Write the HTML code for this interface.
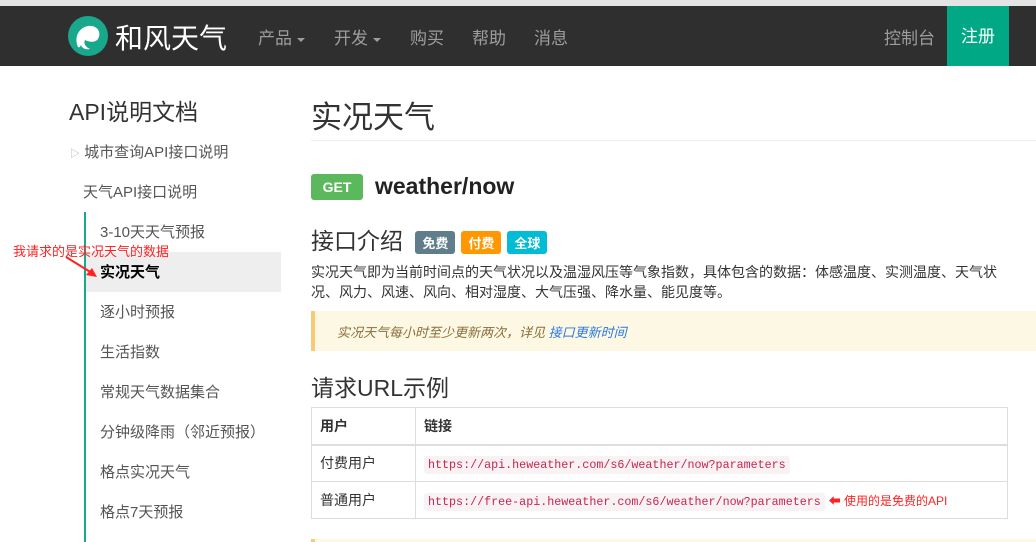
<!DOCTYPE html>
<html><head><meta charset="utf-8"><style>
*{margin:0;padding:0;box-sizing:border-box}
body{width:1036px;height:542px;overflow:hidden;background:#fff;font-family:"Liberation Sans","Noto Sans CJK SC",sans-serif;color:#333;position:relative}
.abs{position:absolute;white-space:nowrap}
.top{position:absolute;left:0;top:0;width:1036px;height:6px;background:#e4e4e4}
.nav{position:absolute;left:0;top:6px;width:1036px;height:60px;background:#2f2f2f}
.nav .it{position:absolute;top:18px;font-size:17px;color:#9d9d9d}
.car{display:inline-block;width:0;height:0;border-left:4px solid transparent;border-right:4px solid transparent;border-top:4px solid #9d9d9d;vertical-align:middle;margin-left:5px}
.reg{position:absolute;left:947px;top:0;width:62px;height:60px;background:#00a886;color:#fff;font-size:17px;text-align:center;line-height:62px}
.side{font-size:15px;color:#555}
.badge{display:inline-block;color:#fff;font-size:13px;font-weight:bold;padding:2px 7px;border-radius:3px;margin-left:6px;vertical-align:middle}
code{font-family:"Liberation Mono",monospace;font-size:11.7px;color:#c7254e;background:#f9f2f4;padding:2px 4px;border-radius:3px}
table{position:absolute;left:311px;top:407px;width:697px;border-collapse:collapse;font-size:14px}
td{border:1px solid #ddd;padding:0 8px;height:37px}
</style></head><body>
<div class="top"></div>
<div class="nav">
<svg class="abs" style="left:68px;top:10px" width="40" height="40" viewBox="0 0 40 40"><circle cx="20" cy="20" r="20" fill="#1aa88c"/><path d="M10 31 C6 22 10 12 20 10 C29 9 34 16 30 23 C27 27 21 26 17 24 C15 28 18 31 22 33 C17 34 14 32 13 29 C12 31 11 32 10 31Z" fill="#fff"/></svg>
<div class="abs" style="left:115px;top:11px;font-size:28px;color:#fff">和风天气</div>
<div class="it" style="left:258px">产品<span class="car"></span></div>
<div class="it" style="left:334px">开发<span class="car"></span></div>
<div class="it" style="left:410px">购买</div>
<div class="it" style="left:472px">帮助</div>
<div class="it" style="left:534px">消息</div>
<div class="it" style="left:884px">控制台</div>
<div class="reg">注册</div>
</div>

<div class="abs" style="left:69px;top:93px;font-size:23px;color:#333">API说明文档</div>
<div class="abs side" style="left:70px;top:141px"><span style="font-size:10px;color:#aaa">▷</span> 城市查询API接口说明</div>
<div class="abs side" style="left:83px;top:181px">天气API接口说明</div>
<div class="abs" style="left:84px;top:212px;width:2px;height:330px;background:#1aa88c"></div>
<div class="abs side" style="left:100px;top:221px">3-10天天气预报</div>
<div class="abs" style="left:86px;top:252px;width:195px;height:40px;background:#eee"></div>
<div class="abs" style="left:100px;top:261px;font-size:15px;color:#000;font-weight:bold">实况天气</div>
<div class="abs" style="left:13px;top:241px;font-size:13px;color:#f22">我请求的是实况天气的数据</div>
<svg class="abs" style="left:64px;top:255px" width="36" height="24"><path d="M2 2 L28 18" stroke="#f22" stroke-width="2"/><path d="M33 22 L22 20 L28 13Z" fill="#f22"/></svg>
<div class="abs side" style="left:100px;top:301px">逐小时预报</div>
<div class="abs side" style="left:100px;top:341px">生活指数</div>
<div class="abs side" style="left:100px;top:381px">常规天气数据集合</div>
<div class="abs side" style="left:100px;top:421px">分钟级降雨（邻近预报）</div>
<div class="abs side" style="left:100px;top:461px">格点实况天气</div>
<div class="abs side" style="left:100px;top:501px">格点7天预报</div>

<div class="abs" style="left:311px;top:92px;font-size:31px;color:#333">实况天气</div>
<div class="abs" style="left:311px;top:140px;width:725px;height:1px;background:#eee"></div>
<div class="abs" style="left:311px;top:174px;width:52px;height:26px;background:#5cb85c;border-radius:3px;color:#fff;font-weight:bold;font-size:14px;text-align:center;line-height:26px">GET</div>
<div class="abs" style="left:375px;top:173px;font-size:23px;font-weight:bold;color:#222">weather/now</div>
<div class="abs" style="left:311px;top:222px;font-size:23px;color:#333">接口介绍 <span class="badge" style="background:#607d8b">免费</span><span class="badge" style="background:#ff9800">付费</span><span class="badge" style="background:#00bcd4">全球</span></div>
<div class="abs" style="left:311px;top:262px;font-size:14px;line-height:20px;color:#333;white-space:normal;width:700px">实况天气即为当前时间点的天气状况以及温湿风压等气象指数，具体包含的数据：体感温度、实测温度、天气状况、风力、风速、风向、相对湿度、大气压强、降水量、能见度等。</div>
<div class="abs" style="left:311px;top:311px;width:726px;height:40px;background:#fcf8e3;border-left:4px solid #f7ca77"></div>
<div class="abs" style="left:337px;top:322px;font-size:13px;font-style:italic;color:#8a6d3b">实况天气每小时至少更新两次，详见 <span style="color:#2a7ae2">接口更新时间</span></div>
<div class="abs" style="left:311px;top:369px;font-size:23px;color:#333">请求URL示例</div>
<table>
<tr style="font-weight:bold"><td style="width:104px;border-bottom:2px solid #ddd">用户</td><td style="border-bottom:2px solid #ddd">链接</td></tr>
<tr><td>付费用户</td><td><code>https://api.heweather.com/s6/weather/now?parameters</code></td></tr>
<tr><td>普通用户</td><td><code>https://free-api.heweather.com/s6/weather/now?parameters</code> <span style="color:#f22;font-size:12px">&#x2B05; 使用的是免费的API</span></td></tr>
</table>
<div class="abs" style="left:311px;top:539px;width:726px;height:3px;background:#fcf8e3;border-left:4px solid #f7ca77"></div>
</body></html>
